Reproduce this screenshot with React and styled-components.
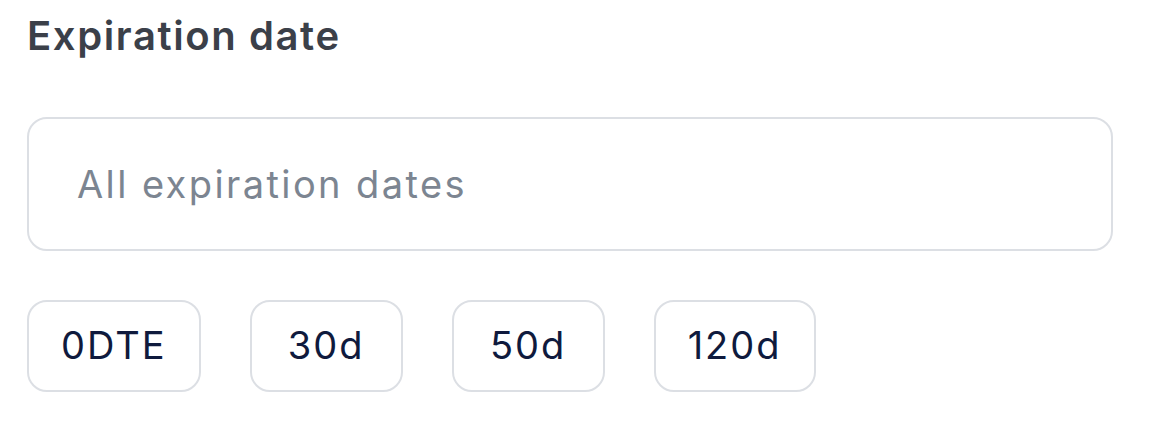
import React from "react";
import styled, { createGlobalStyle } from "styled-components";

const Global = createGlobalStyle`
  html, body { margin: 0; padding: 0; background: #ffffff; }
  body { font-family: Inter, "Noto Sans", sans-serif; }
`;

const Panel = styled.section`
  width: 1085px;
  padding: 12px 0 0 27px;
  display: flex;
  flex-direction: column;
`;

const Title = styled.h2`
  margin: 0;
  font-family: Inter, "Noto Sans", sans-serif;
  font-weight: 600;
  font-size: 40px;
  line-height: 48px;
  letter-spacing: 1.6px;
  color: #3b4049;
`;

const Field = styled.input`
  box-sizing: border-box;
  margin-top: 57px;
  width: 1086px;
  height: 134px;
  padding: 0 48px;
  border: 2px solid #dcdfe4;
  border-radius: 20px;
  background: #fff;
  font-family: Inter, "Noto Sans", sans-serif;
  font-size: 38px;
  letter-spacing: 2.4px;
  color: #0f1a3d;
  outline: none;
  &::placeholder { color: #7c8591; opacity: 1; }
`;

const ChipRow = styled.div`
  display: flex;
  gap: 49px;
  margin-top: 49px;
`;

const Chip = styled.button`
  box-sizing: border-box;
  height: 92px;
  min-width: 153px;
  padding: 0 32px 2px;
  border: 2px solid #dcdfe4;
  border-radius: 20px;
  background: #fff;
  font-family: Inter, "Noto Sans", sans-serif;
  font-size: 38px;
  letter-spacing: 2px;
  color: #0f1a3d;
  cursor: pointer;
`;

const chips = ["0DTE", "30d", "50d", "120d"];

export default function App() {
  return (
    <>
      <Global />
      <Panel>
        <Title>Expiration date</Title>
        <Field placeholder="All expiration dates" />
        <ChipRow>
          {chips.map((c) => (
            <Chip key={c}>{c}</Chip>
          ))}
        </ChipRow>
      </Panel>
    </>
  );
}
